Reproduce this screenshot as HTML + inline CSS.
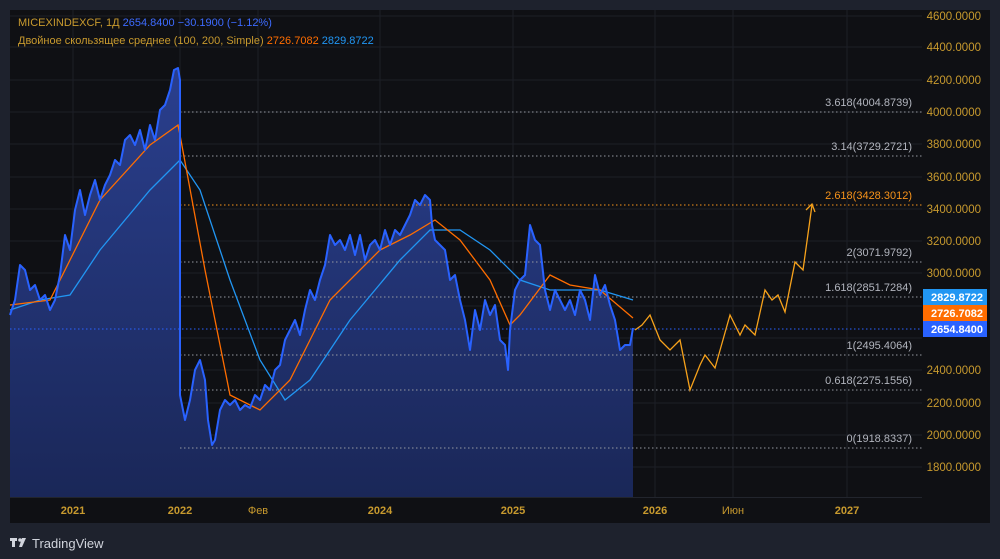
<!DOCTYPE html>
<html><head><meta charset="utf-8"><style>
html,body{margin:0;padding:0;background:#1e222d;width:1000px;height:559px;overflow:hidden;font-family:"Liberation Sans","DejaVu Sans",sans-serif}
svg{position:absolute;left:0;top:0}
</style></head><body>
<svg width="1000" height="559" viewBox="0 0 1000 559" xmlns="http://www.w3.org/2000/svg">
<defs><linearGradient id="g" x1="0" y1="0" x2="0" y2="1"><stop offset="0" stop-color="#2a3f8e"/><stop offset="1" stop-color="#1a2758"/></linearGradient></defs>
<rect x="10" y="10" width="980" height="513" fill="#0f1014"/>
<line x1="10" y1="497.5" x2="922" y2="497.5" stroke="#22252d"/>
<g stroke="#1c1f26" stroke-width="1">
<line x1="10" y1="16" x2="922" y2="16"/><line x1="10" y1="47" x2="922" y2="47"/><line x1="10" y1="80" x2="922" y2="80"/><line x1="10" y1="112" x2="922" y2="112"/><line x1="10" y1="144" x2="922" y2="144"/><line x1="10" y1="177" x2="922" y2="177"/><line x1="10" y1="209" x2="922" y2="209"/><line x1="10" y1="241" x2="922" y2="241"/><line x1="10" y1="273" x2="922" y2="273"/><line x1="10" y1="306" x2="922" y2="306"/><line x1="10" y1="338" x2="922" y2="338"/><line x1="10" y1="370" x2="922" y2="370"/><line x1="10" y1="403" x2="922" y2="403"/><line x1="10" y1="435" x2="922" y2="435"/><line x1="10" y1="467" x2="922" y2="467"/>
<line x1="73" y1="10" x2="73" y2="497"/><line x1="180" y1="10" x2="180" y2="497"/><line x1="258" y1="10" x2="258" y2="497"/><line x1="380" y1="10" x2="380" y2="497"/><line x1="513" y1="10" x2="513" y2="497"/><line x1="655" y1="10" x2="655" y2="497"/><line x1="733" y1="10" x2="733" y2="497"/><line x1="847" y1="10" x2="847" y2="497"/>
</g>
<polygon fill="url(#g)" points="10,497 10,315 15,300 20,265 25,270 30,290 35,285 40,300 45,295 50,310 55,300 60,275 65,235 70,250 75,210 80,190 85,215 90,195 95,180 100,200 105,185 110,175 115,160 120,165 125,140 130,135 135,145 140,130 145,150 150,125 155,140 160,110 165,105 170,90 174,70 178,68 180,80 180,395 185,420 190,400 195,370 200,360 205,380 208,420 212,445 215,440 220,410 225,400 230,405 235,400 240,410 245,405 250,408 255,395 260,400 265,385 270,390 275,370 280,365 285,340 290,330 295,320 300,335 305,310 310,290 315,300 320,280 325,265 330,235 335,245 340,240 345,250 350,235 355,255 360,235 365,260 370,245 375,240 380,250 385,230 390,245 395,230 400,235 405,225 410,215 415,200 420,205 425,195 430,200 432,225 435,240 440,245 445,250 450,280 455,275 460,300 465,320 470,350 475,310 480,330 485,300 490,315 495,305 500,340 505,345 508,370 510,330 515,290 520,280 525,275 530,225 535,240 540,245 545,290 550,310 555,290 560,300 565,310 570,300 575,315 580,290 585,300 590,320 595,275 600,295 605,285 610,305 615,320 620,350 625,345 630,345 633,328 633,497"/>
<g fill="none" stroke-width="1" stroke-dasharray="1.5,2.5">
<line x1="180" y1="112" x2="922" y2="112" stroke="#9598a1"/>
<line x1="180" y1="156" x2="922" y2="156" stroke="#9598a1"/>
<line x1="180" y1="205" x2="922" y2="205" stroke="#f7931a"/>
<line x1="180" y1="262" x2="922" y2="262" stroke="#9598a1"/>
<line x1="180" y1="297" x2="922" y2="297" stroke="#9598a1"/>
<line x1="180" y1="355" x2="922" y2="355" stroke="#9598a1"/>
<line x1="180" y1="390" x2="922" y2="390" stroke="#9598a1"/>
<line x1="180" y1="448" x2="922" y2="448" stroke="#9598a1"/>
<line x1="10" y1="329" x2="922" y2="329" stroke="#2962ff"/>
</g>
<polyline fill="none" stroke="#2196f3" stroke-width="1.3" points="10,310 40,300 70,295 100,250 150,190 180,160 200,190 230,280 260,360 285,400 310,380 350,320 400,260 430,230 460,230 490,250 520,280 550,290 600,290 633,300"/>
<polyline fill="none" stroke="#ff6d00" stroke-width="1.3" points="10,305 50,300 100,200 150,145 178,125 180,135 205,270 230,395 260,410 290,380 330,300 380,250 410,235 435,220 460,240 490,280 510,325 520,315 550,275 570,285 600,290 633,318"/>
<polyline fill="none" stroke="#2962ff" stroke-width="2" stroke-linejoin="round" points="10,315 15,300 20,265 25,270 30,290 35,285 40,300 45,295 50,310 55,300 60,275 65,235 70,250 75,210 80,190 85,215 90,195 95,180 100,200 105,185 110,175 115,160 120,165 125,140 130,135 135,145 140,130 145,150 150,125 155,140 160,110 165,105 170,90 174,70 178,68 180,80 180,395 185,420 190,400 195,370 200,360 205,380 208,420 212,445 215,440 220,410 225,400 230,405 235,400 240,410 245,405 250,408 255,395 260,400 265,385 270,390 275,370 280,365 285,340 290,330 295,320 300,335 305,310 310,290 315,300 320,280 325,265 330,235 335,245 340,240 345,250 350,235 355,255 360,235 365,260 370,245 375,240 380,250 385,230 390,245 395,230 400,235 405,225 410,215 415,200 420,205 425,195 430,200 432,225 435,240 440,245 445,250 450,280 455,275 460,300 465,320 470,350 475,310 480,330 485,300 490,315 495,305 500,340 505,345 508,370 510,330 515,290 520,280 525,275 530,225 535,240 540,245 545,290 550,310 555,290 560,300 565,310 570,300 575,315 580,290 585,300 590,320 595,275 600,295 605,285 610,305 615,320 620,350 625,345 630,345 633,328"/>
<polyline fill="none" stroke="#f7a21b" stroke-width="1.3" points="635,330 642,325 650,315 660,340 670,350 680,340 690,390 700,365 705,355 715,368 730,315 740,335 745,325 755,335 765,290 772,300 778,295 785,312 795,262 803,270 812,205"/>
<polyline fill="none" stroke="#f7a21b" stroke-width="1.3" points="806,210 812,204 815,212"/>
<g font-size="11" fill="#b2b5be" text-anchor="end">
<text x="912" y="106">3.618(4004.8739)</text>
<text x="912" y="150">3.14(3729.2721)</text>
<text x="912" y="199" fill="#f7931a">2.618(3428.3012)</text>
<text x="912" y="256">2(3071.9792)</text>
<text x="912" y="291">1.618(2851.7284)</text>
<text x="912" y="349">1(2495.4064)</text>
<text x="912" y="384">0.618(2275.1556)</text>
<text x="912" y="442">0(1918.8337)</text>
</g>
<g font-size="11.5" fill="#c89a2e" text-anchor="end">
<text x="981" y="20">4600.0000</text><text x="981" y="51">4400.0000</text><text x="981" y="84">4200.0000</text><text x="981" y="116">4000.0000</text><text x="981" y="148">3800.0000</text><text x="981" y="181">3600.0000</text><text x="981" y="213">3400.0000</text><text x="981" y="245">3200.0000</text><text x="981" y="277">3000.0000</text><text x="981" y="374">2400.0000</text><text x="981" y="407">2200.0000</text><text x="981" y="439">2000.0000</text><text x="981" y="471">1800.0000</text>
</g>
<rect x="923" y="289" width="64" height="16" fill="#2196f3"/>
<rect x="923" y="305" width="64" height="16" fill="#ff6d00"/>
<rect x="923" y="321" width="64" height="16" fill="#2962ff"/>
<g font-size="11" fill="#fff" font-weight="bold" text-anchor="end">
<text x="983" y="301">2829.8722</text><text x="983" y="317">2726.7082</text><text x="983" y="333">2654.8400</text>
</g>
<g font-size="11" fill="#c89a2e" text-anchor="middle" font-weight="bold">
<text x="73" y="514">2021</text><text x="180" y="514">2022</text><text x="258" y="514" font-weight="normal">Фев</text><text x="380" y="514">2024</text><text x="513" y="514">2025</text><text x="655" y="514">2026</text><text x="733" y="514" font-weight="normal">Июн</text><text x="847" y="514">2027</text>
</g>
<g font-size="11">
<text x="18" y="26" fill="#c89a2e">MICEXINDEXCF, 1Д <tspan fill="#3d6bff">2654.8400  −30.1900 (−1.12%)</tspan></text>
<text x="18" y="44" fill="#c89a2e">Двойное скользящее среднее (100, 200, Simple) <tspan fill="#ff6d00">2726.7082</tspan> <tspan fill="#2196f3">2829.8722</tspan></text>
</g>
<g fill="#d1d4dc"><rect x="10" y="538" width="7" height="3"/><rect x="12" y="538" width="3" height="9"/><circle cx="20" cy="540" r="1.8"/><polygon points="22,538 26,538 22,547 19,547"/></g>
<text x="32" y="548" font-size="13" fill="#d1d4dc">TradingView</text>
</svg>
</body></html>
